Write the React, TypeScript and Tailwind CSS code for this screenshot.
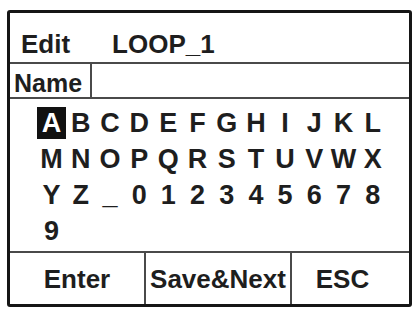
import React from 'react';

const CHARS = 'ABCDEFGHIJKLMNOPQRSTUVWXYZ_0123456789'.split('');
const SELECTED = 0;

export default function App() {
  return (
    <div className="w-[415px] h-[309px] bg-white pt-[10px] pl-[7px] font-['Liberation_Sans',Arial,sans-serif] font-bold text-[#1e1e1e]">
      <div className="w-[405px] h-[297px] border-[3px] border-[#161616] rounded-[3px] flex flex-col">
        {/* Title row */}
        <div className="h-[51px] border-b-2 border-[#4a4a4a] flex items-center pt-[12px] pl-[11px] text-[26px] leading-none">
          <span>Edit</span>
          <span className="ml-[42px] font-semibold">LOOP_1</span>
        </div>

        {/* Name row */}
        <div className="h-[35px] border-b-2 border-[#4a4a4a] flex">
          <div className="w-[82px] border-r-2 border-[#4a4a4a] flex items-center pt-[6px] pl-[4px] text-[25px] leading-none">
            Name
          </div>
          <div className="flex-1" />
        </div>

        {/* Character picker */}
        <div className="h-[154px] border-b-2 border-[#4a4a4a] pt-[6px] pl-[27px]">
          <div className="grid grid-cols-[repeat(12,29.2px)] auto-rows-[36px] text-[27px] leading-none">
            {CHARS.map((c, i) => (
              <div key={c} className="flex items-center justify-center">
                {i === SELECTED ? (
                  <span className="w-[30px] h-[32px] bg-[#111] text-white flex items-center justify-center">{c}</span>
                ) : (
                  <span>{c}</span>
                )}
              </div>
            ))}
          </div>
        </div>

        {/* Soft keys */}
        <div className="flex-1 flex text-[26px] leading-none">
          <div className="w-[136px] border-r-2 border-[#4a4a4a] flex items-center justify-center">Enter</div>
          <div className="w-[146px] border-r-2 border-[#4a4a4a] flex items-center justify-center">Save&amp;Next</div>
          <div className="flex-1 flex items-center justify-center pr-[16px]">ESC</div>
        </div>
      </div>
    </div>
  );
}
